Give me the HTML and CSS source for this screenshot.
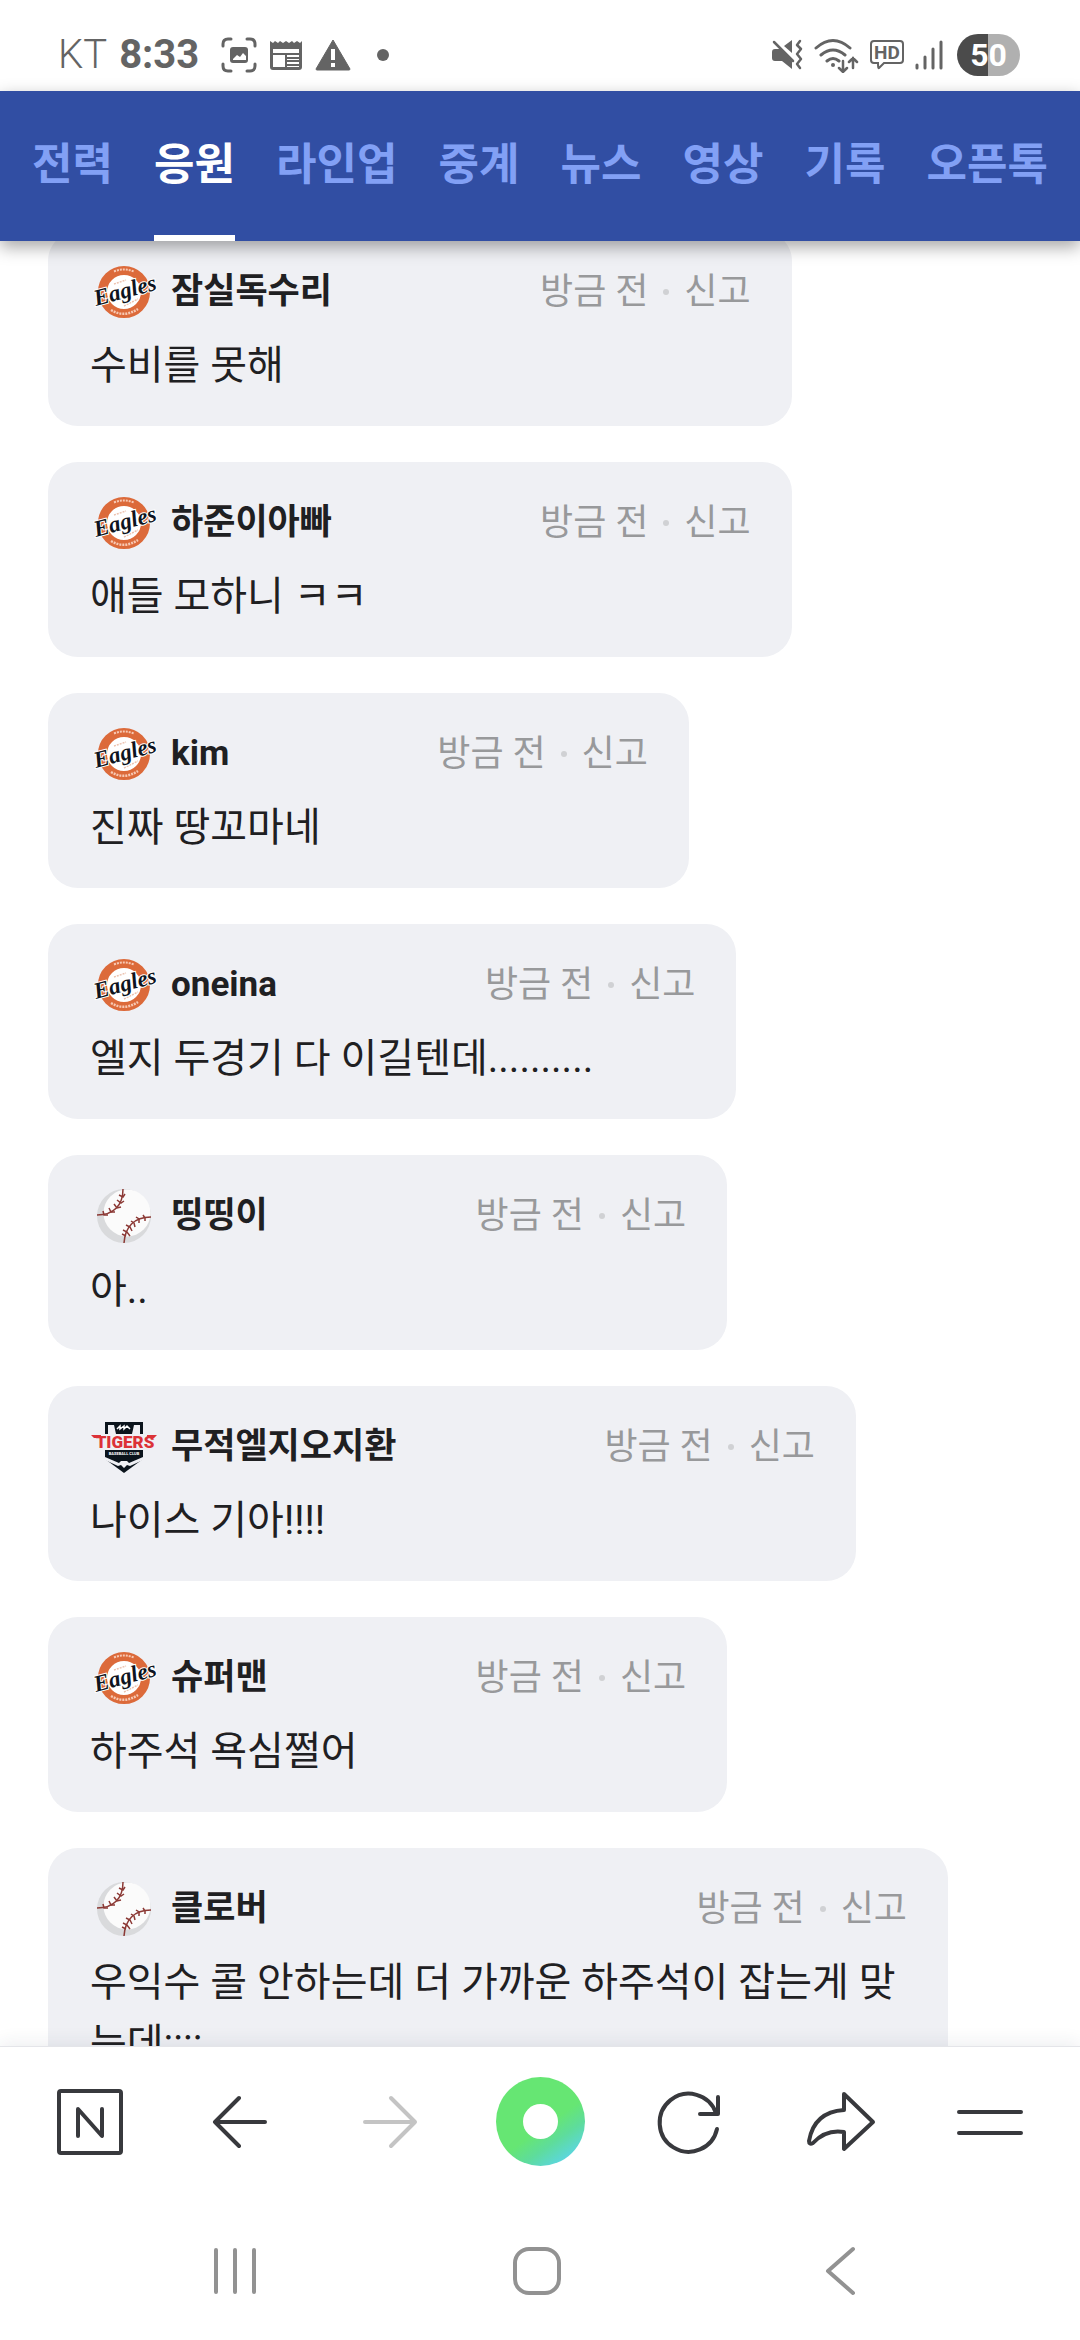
FILE: index.html
```html
<!DOCTYPE html>
<html lang="ko">
<head>
  <meta charset="UTF-8">
  <meta name="viewport" content="width=device-width, initial-scale=1">
  <title>응원</title>
  <link rel="stylesheet" href="styles.css">
</head>
<body>
  <!-- team logos -->
  <svg class="sprite" aria-hidden="true">
    <symbol id="eagles" viewBox="0 0 68 56">
      <circle cx="34" cy="28" r="21.5" fill="#fff" stroke="#dc6a3a" stroke-width="9"/>
      <path d="M24 7.5q10-4 20 0" fill="none" stroke="#f7c9b4" stroke-width="2" stroke-dasharray="2 1"/>
      <path d="M21 46q13 8 27-1" fill="none" stroke="#f7c9b4" stroke-width="2.5" stroke-dasharray="2 1"/>
      <path d="M24 20l12-4M34 42l14-7" fill="none" stroke="#ecc3b0" stroke-width="1.5" stroke-dasharray="2 1"/>
      <text class="eagles-text" x="6" y="42" transform="rotate(-15 6 42)">Eagles</text>
    </symbol>
    <symbol id="ball" viewBox="0 0 68 56">
      <circle cx="34" cy="28" r="27" fill="#d9dadc"/>
      <circle cx="37" cy="25" r="23.5" fill="#fbfbfb"/>
      <g fill="none" stroke="#8c3a36" stroke-width="1.5">
        <path d="M33 1C33 17 24 27 7 27M34 55C35 39 44 29 61 29"/>
        <path d="M29 7l4 2 2-3M27 12l4 3 3-2M24 16l3 4 4-1M19 20l2 4 4 0M13 23l1 4 4 0M36 48l-4-2M33 42l4 2 3 4M36 37l4 2 2 4M41 33l3 2 1 4M46 29l3 2 0 4M53 27l2 3 0 3"/>
      </g>
    </symbol>
    <symbol id="tigers" viewBox="0 0 68 56">
      <path d="M15 3h38v37l-19 14-19-14z" fill="#0b141c"/>
      <path d="M18 6h6l2 9h-8zM50 6h-6l-2 9h8z" fill="#eff0f4"/>
      <path d="M27 10l3-3v3l4-3v3l3-3 3 3" fill="none" stroke="#fff" stroke-width="1.5"/>
      <path d="M15 38l14 6 2-2h6l2 2 14-6v3l-13 6-3-1-3 3-3-3-3 1-13-6z" fill="#eff0f4"/>
      <path d="M0 15h68l-3 4 1 11-8 1H4l3-12z" fill="#eff0f4"/>
      <path d="M1 16h10v3H4zM57 16h10l-3 3h-7z" fill="#dc3237"/>
      <text class="tigers-text" x="35" y="29">TIGERS</text>
      <text class="tigers-sub" x="34" y="36">BASEBALL CLUB</text>
    </symbol>
  </svg>

  <div class="status">
    <div class="status-left">
      <span class="carrier">KT</span>
      <span class="clock">8:33</span>
      <svg class="capture" width="36" height="36" viewBox="0 0 36 36" fill="none" stroke="#646464" stroke-width="3" stroke-linecap="round">
        <path d="M2 9V7q0-5 5-5h3M26 2h3q5 0 5 5v2M2 27v2q0 5 5 5h3M26 34h3q5 0 5-5v-2"/>
        <rect x="9" y="10" width="18" height="16" rx="3" fill="#646464" stroke="none"/>
        <path d="M12 22l4-4 3 2 3-4 3 3v4H12z" fill="#fff" stroke="none"/>
      </svg>
      <svg width="34" height="32" viewBox="0 0 34 32">
        <path d="M1 2l3 2 2-2 3 2 2-2 3 2 3-2 3 2 3-2 2 2 3-2 3 2 2-2v26q0 3-3 3H4q-3 0-3-3z" fill="#646464"/>
        <path d="M4 10h26v4H4zM4 16h12v12H4zM18 16h12v2H18zM18 20h12v1H18zM18 23h12v2H18zM18 27h12v1H18z" fill="#fff"/>
      </svg>
      <svg class="warning" width="36" height="32" viewBox="0 0 36 32">
        <path d="M18 1L35 30q0 1-1 1H2q-1 0-1-1z" fill="#646464" stroke="#646464" stroke-linejoin="round"/>
        <path d="M16 10h4v11h-4zM16 24h4v4h-4z" fill="#fff"/>
      </svg>
      <span class="more-dot"></span>
    </div>
    <div class="status-right">
      <svg width="32" height="32" viewBox="0 0 32 32">
        <path d="M4 10h6l11 10v10l-10-8H4q-3 0-3-3v-6q0-3 3-3zM13 7l8-6v13z" fill="#646464"/>
        <path d="M3 2l20 21" stroke="#fff" stroke-width="2"/>
        <path d="M3 3l19 19" stroke="#646464" stroke-width="2.5" stroke-linecap="round"/>
        <path d="M29 2l-3 4 4 4-4 5 4 5-4 5 3 4" fill="none" stroke="#646464" stroke-width="2.5" stroke-linecap="round" stroke-linejoin="round"/>
      </svg>
      <svg width="46" height="36" viewBox="0 0 46 36" fill="none" stroke="#646464" stroke-width="3" stroke-linecap="round">
        <path d="M3 11q17-15 34 0M8 18q12-10 24 0M14 24q6-5 12 0"/>
        <circle cx="20" cy="28" r="2" fill="#646464" stroke="none"/>
        <path d="M30 24v10M26 31l4 4 4-4M40 31V21M36 25l4-4 4 4" stroke-width="2.5"/>
      </svg>
      <svg width="36" height="32" viewBox="0 0 36 32">
        <path d="M5 2h26q3 0 3 3v16q0 3-3 3H15l-5 5q-1 1-1-5H5q-3 0-3-3V5q0-3 3-3z" fill="none" stroke="#646464" stroke-width="2"/>
        <text class="hd-text" x="18" y="20">HD</text>
      </svg>
      <svg class="signal" width="28" height="30" viewBox="0 0 28 30" stroke="#646464" stroke-width="3" stroke-linecap="round">
        <path d="M2 25v3M10 17v11M18 9v19M26 2v26"/>
      </svg>
      <span class="battery">50</span>
    </div>
  </div>

  <nav class="tabs">
    <a href="#">전력</a>
    <a href="#" class="active">응원</a>
    <a href="#">라인업</a>
    <a href="#">중계</a>
    <a href="#">뉴스</a>
    <a href="#">영상</a>
    <a href="#">기록</a>
    <a href="#">오픈톡</a>
  </nav>

  <main class="feed">
    <ul class="comments">
      <li class="comment">
        <div class="comment-head">
          <svg class="team"><use href="#eagles"/></svg>
          <strong class="name">잠실독수리</strong>
          <span class="time">방금 전</span>
          <button type="button" class="report">신고</button>
        </div>
        <p>수비를 못해</p>
      </li>
      <li class="comment">
        <div class="comment-head">
          <svg class="team"><use href="#eagles"/></svg>
          <strong class="name">하준이아빠</strong>
          <span class="time">방금 전</span>
          <button type="button" class="report">신고</button>
        </div>
        <p>애들 모하니 ㅋㅋ</p>
      </li>
      <li class="comment">
        <div class="comment-head">
          <svg class="team"><use href="#eagles"/></svg>
          <strong class="name">kim</strong>
          <span class="time">방금 전</span>
          <button type="button" class="report">신고</button>
        </div>
        <p>진짜 땅꼬마네</p>
      </li>
      <li class="comment">
        <div class="comment-head">
          <svg class="team"><use href="#eagles"/></svg>
          <strong class="name">oneina</strong>
          <span class="time">방금 전</span>
          <button type="button" class="report">신고</button>
        </div>
        <p>엘지 두경기 다 이길텐데..........</p>
      </li>
      <li class="comment">
        <div class="comment-head">
          <svg class="team"><use href="#ball"/></svg>
          <strong class="name">띵띵이</strong>
          <span class="time">방금 전</span>
          <button type="button" class="report">신고</button>
        </div>
        <p>아..</p>
      </li>
      <li class="comment">
        <div class="comment-head">
          <svg class="team"><use href="#tigers"/></svg>
          <strong class="name">무적엘지오지환</strong>
          <span class="time">방금 전</span>
          <button type="button" class="report">신고</button>
        </div>
        <p>나이스 기아!!!!</p>
      </li>
      <li class="comment">
        <div class="comment-head">
          <svg class="team"><use href="#eagles"/></svg>
          <strong class="name">슈퍼맨</strong>
          <span class="time">방금 전</span>
          <button type="button" class="report">신고</button>
        </div>
        <p>하주석 욕심쩔어</p>
      </li>
      <li class="comment">
        <div class="comment-head">
          <svg class="team"><use href="#ball"/></svg>
          <strong class="name">클로버</strong>
          <span class="time">방금 전</span>
          <button type="button" class="report">신고</button>
        </div>
        <p>우익수 콜 안하는데 더 가까운 하주석이 잡는게 맞는데::::</p>
      </li>
    </ul>
  </main>

  <footer class="toolbar">
    <button type="button" aria-label="홈">
      <svg viewBox="0 0 72 72"><rect x="5" y="5" width="62" height="62" rx="2"/><path d="M24 50V23l24 27V23"/></svg>
    </button>
    <button type="button" aria-label="뒤로">
      <svg viewBox="0 0 72 72"><path d="M61 36H11M35 12L11 36l24 24"/></svg>
    </button>
    <button type="button" aria-label="앞으로" disabled>
      <svg viewBox="0 0 72 72"><path d="M11 36h50M37 12l24 24-24 24"/></svg>
    </button>
    <button type="button" aria-label="그린닷"><span class="green-dot"></span></button>
    <button type="button" aria-label="새로고침">
      <svg viewBox="0 0 72 72"><path d="M63 43A29 29 0 1 1 62 27M64 11v17H46"/></svg>
    </button>
    <button type="button" aria-label="공유">
      <svg viewBox="0 0 72 72"><path d="M40 8l29 28-29 27V46Q22 43 9 57q-4 2-4-2Q10 26 40 24z"/></svg>
    </button>
    <button type="button" aria-label="메뉴">
      <svg viewBox="0 0 72 72"><path d="M5 26h62M5 47h62"/></svg>
    </button>
  </footer>

  <div class="system-nav">
    <button type="button" aria-label="최근 앱">
      <svg viewBox="0 0 56 56"><path d="M9 7v42M28 7v42M47 7v42"/></svg>
    </button>
    <button type="button" aria-label="홈 화면">
      <svg viewBox="0 0 56 56"><rect x="6" y="6" width="44" height="44" rx="14"/></svg>
    </button>
    <button type="button" aria-label="이전">
      <svg viewBox="0 0 56 56"><path d="M41 6L16 28l25 22"/></svg>
    </button>
  </div>
</body>
</html>
```
FILE: styles.css
```css
* {
  box-sizing: border-box;
}

body {
  display: flex;
  flex-direction: column;
  height: 100vh;
  margin: 0;
  overflow: hidden;
  background: #fff;
  color: #1f2022;
  font-family: Roboto, "Noto Sans CJK KR", sans-serif;
}

button {
  padding: 0;
  border: 0;
  background: none;
  font-family: inherit;
  cursor: pointer;
}

.sprite {
  display: none;
}

/* status bar */
.status {
  display: flex;
  flex: none;
  align-items: center;
  justify-content: space-between;
  height: 91px;
  padding: 18px 60px 0 58px;
  color: #646464;
}

.status-left,
.status-right {
  display: flex;
  align-items: center;
  gap: 12px;
  font-size: 40px;
}

.status-right {
  gap: 10px;
}

.carrier {
  font-weight: 300;
}

.clock {
  font-weight: 700;
}

.capture {
  margin-left: 10px;
}

.more-dot {
  width: 12px;
  height: 12px;
  margin-left: 14px;
  border-radius: 50%;
  background: #646464;
}

.hd-text {
  font-size: 19px;
  font-weight: 700;
  text-anchor: middle;
  fill: #646464;
}

.battery {
  width: 63px;
  height: 42px;
  margin-left: 4px;
  border-radius: 21px;
  background: linear-gradient(90deg, #4b4b4b 50%, #b0b0b0 50%);
  color: #fff;
  font-size: 32px;
  font-weight: 700;
  line-height: 42px;
  text-align: center;
}

/* tabs */
.tabs {
  position: relative;
  z-index: 1;
  display: flex;
  flex: none;
  justify-content: space-between;
  height: 150px;
  padding: 0 32px;
  background: #314ea3;
  box-shadow: 0 6px 16px rgba(0, 0, 0, 0.35);
}

.tabs a {
  height: 150px;
  border-bottom: 6px solid transparent;
  color: #82a0f5;
  font-size: 44px;
  font-weight: 700;
  line-height: 148px;
  text-decoration: none;
}

.tabs .active {
  border-color: #fff;
  color: #fff;
}

/* comments */
.feed {
  flex: 1;
  min-height: 0;
  overflow: hidden;
}

.comments {
  display: flex;
  flex-direction: column;
  align-items: flex-start;
  gap: 36px;
  margin: -10px 0 0;
  padding: 0 132px 0 48px;
  list-style: none;
}

.comment {
  padding: 33px 41px 30px 42px;
  border-radius: 30px;
  background: #eff0f4;
}

.comment-head {
  display: flex;
  align-items: center;
  height: 56px;
}

.team {
  flex: none;
  width: 68px;
  height: 56px;
  margin-right: 13px;
}

.name {
  flex: 1;
  margin-right: 208px;
  font-size: 35px;
  line-height: 50px;
  white-space: nowrap;
}

.time,
.report {
  color: #98999b;
  font-size: 36px;
  line-height: 50px;
  white-space: nowrap;
}

.report {
  display: flex;
  align-items: center;
}

.report::before {
  content: "";
  width: 6px;
  height: 6px;
  margin: 0 15px;
  border-radius: 50%;
  background: #d0d1d4;
}

.comment p {
  margin: 15px 0 0;
  font-size: 40px;
  line-height: 61px;
}

.eagles-text {
  font-family: "Liberation Serif", serif;
  font-size: 23px;
  font-style: italic;
  font-weight: 700;
  fill: #0e1420;
  stroke: #fff;
  stroke-width: 2px;
  paint-order: stroke;
}

.tigers-text {
  font-family: Roboto, sans-serif;
  font-size: 17px;
  font-weight: 900;
  text-anchor: middle;
  fill: #dc3237;
}

.tigers-sub {
  font-size: 4px;
  font-weight: 700;
  text-anchor: middle;
  fill: #fff;
}

/* browser toolbar */
.toolbar {
  position: relative;
  display: flex;
  flex: none;
  height: 150px;
  padding: 0 15px;
  border-top: 1px solid #e4e5e9;
  background: #fff;
  box-shadow: 0 -4px 16px rgba(40, 50, 80, 0.08);
}

.toolbar button,
.system-nav button {
  display: flex;
  flex: 1;
  align-items: center;
  justify-content: center;
}

.toolbar svg {
  width: 72px;
  height: 72px;
  fill: none;
  stroke: #38393d;
  stroke-width: 4px;
  stroke-linecap: round;
  stroke-linejoin: round;
}

.toolbar button:disabled svg {
  stroke: #c4c4c4;
}

.green-dot {
  width: 89px;
  height: 89px;
  border: 27px solid transparent;
  border-radius: 50%;
  background: linear-gradient(#fff, #fff) padding-box, linear-gradient(145deg, #66e673 55%, #5edc9c 70%, #5bd5ec 90%) border-box;
}

/* android navigation */
.system-nav {
  position: relative;
  display: flex;
  flex: none;
  height: 144px;
  padding: 6px 89px 0 84px;
  background: #fff;
}

.system-nav svg {
  width: 56px;
  height: 56px;
  fill: none;
  stroke: #929292;
  stroke-width: 4px;
  stroke-linecap: round;
  stroke-linejoin: round;
}
```
